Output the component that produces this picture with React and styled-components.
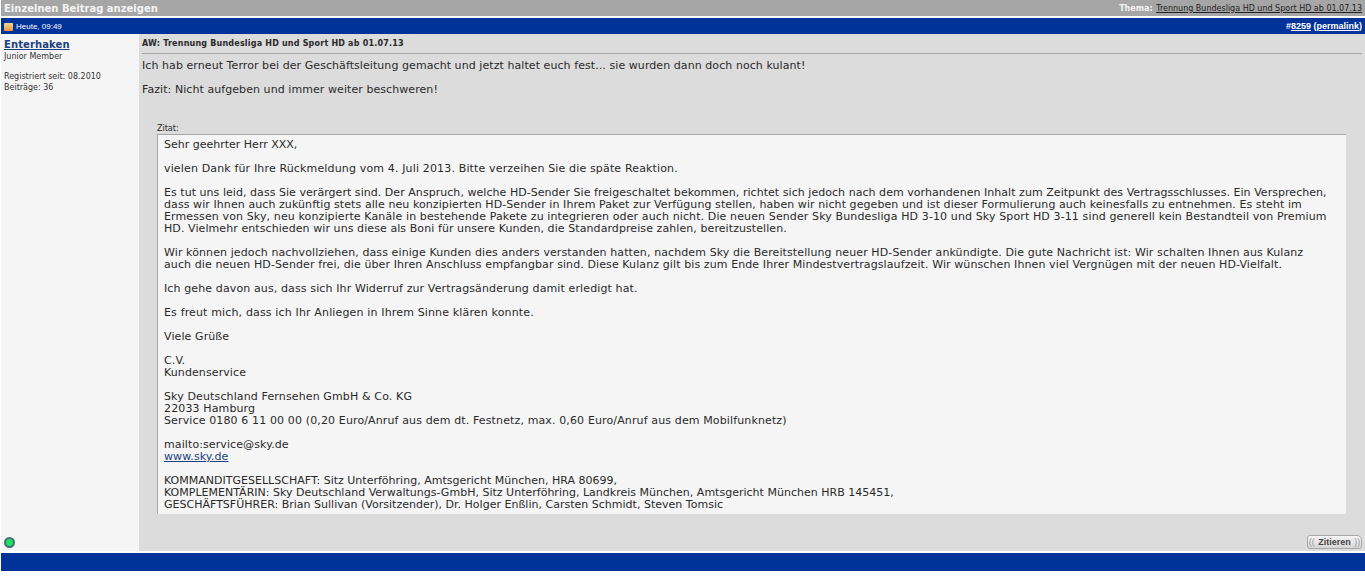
import React from "react";
import styled, { createGlobalStyle } from "styled-components";

const Global = createGlobalStyle`
  html, body {
    margin: 0;
    padding: 0;
    background: #fff;
  }
  body {
    font-family: "DejaVu Sans", Verdana, sans-serif;
    font-size: 11px;
    color: #2a2a2a;
  }
`;

const Page = styled.div`
  padding-left: 1px;
  width: 1364px;
  height: 577px;
  overflow: hidden;
`;

const TitleBar = styled.div`
  display: flex;
  justify-content: space-between;
  align-items: center;
  height: 16px;
  background: #a6a6a6;
  padding: 0 3px;
  margin-bottom: 2px;
`;

const PageTitle = styled.div`
  color: #f4f4f4;
  font-weight: bold;
  font-size: 10px;
`;

const ThreadInfo = styled.div`
  font-size: 8px;
  color: #f4f4f4;
  b {
    font-weight: bold;
    margin-right: 1px;
  }
  a {
    color: #222;
    text-decoration: underline;
  }
`;

const BlueBar = styled.div`
  display: flex;
  justify-content: space-between;
  align-items: center;
  height: 16px;
  background: #003399;
  color: #fff;
  font-family: "Liberation Sans", Arial, sans-serif;
  font-size: 9px;
  padding: 0 3px;
`;

const DateCell = styled.div`
  display: flex;
  align-items: center;
  gap: 3px;
  font-size: 8px;
`;

const PostIcon = styled.span`
  display: block;
  width: 9px;
  height: 8px;
  margin-top: 2px;
  border-radius: 1px;
  background: linear-gradient(#f8d890, #e8943c);
`;

const PostNumber = styled.div`
  font-weight: bold;
  a {
    color: #fff;
    text-decoration: underline;
  }
`;

const PostBody = styled.div`
  display: grid;
  grid-template-columns: 138px 1fr;
  height: 517px;
`;

const UserColumn = styled.div`
  background: #f5f5f5;
  padding: 4px 3px;
  display: flex;
  flex-direction: column;
`;

const UserName = styled.a`
  color: #1c3f80;
  font-weight: bold;
  font-size: 10px;
  letter-spacing: 0.1px;
  line-height: 13px;
  text-decoration: underline;
`;

const UserLine = styled.div`
  font-size: 8px;
  line-height: 11px;
  color: #333;
  margin-top: ${(p) => p.$gap || 0}px;
`;

const OnlineDot = styled.span`
  position: relative;
  top: 1px;
  display: block;
  box-sizing: border-box;
  width: 11px;
  height: 11px;
  margin: auto 0 0 0;
  border-radius: 50%;
  background: #22e060;
  border: 2px solid #3f6f78;
`;

const MessageColumn = styled.div`
  background: #dcdcdc;
  padding: 4px 3px 0;
  display: flex;
  flex-direction: column;
`;

const Subject = styled.div`
  font-weight: bold;
  font-size: 8px;
  letter-spacing: 0.2px;
  line-height: 11px;
  padding-bottom: 4px;
  border-bottom: 1px solid #a6a6a6;
`;

const Message = styled.div`
  margin-top: 6px;
  line-height: 12px;
`;

const Para = styled.p`
  margin: 0 0 12px;
  letter-spacing: ${(p) => p.$track ?? 0.1}px;
`;

const Line = styled.span`
  display: block;
  letter-spacing: ${(p) => p.$track}px;
`;

const QuoteLabel = styled.div`
  margin: 16px 0 0 15px;
  font-size: 8px;
  line-height: 10px;
`;

const QuoteBox = styled.div`
  margin: 0 16px 0 15px;
  padding: 4px 6px;
  height: 371px;
  overflow: hidden;
  background: #f5f5f5;
  border-left: 1px solid #a6a6a6;
  border-top: 1px solid #a6a6a6;
  line-height: 12px;
  white-space: nowrap;
  a {
    color: #1c3f80;
  }
`;

const PostActions = styled.div`
  display: flex;
  justify-content: flex-end;
  margin-top: auto;
  padding: 0 0 2px;
`;

const QuoteButton = styled.div`
  box-sizing: border-box;
  width: 55px;
  height: 14px;
  border: 1px solid #a8a8a8;
  border-radius: 3px 5px 3px 3px;
  background: linear-gradient(#f6f6f6, #d6d6d6);
  text-align: center;
  white-space: nowrap;
  font-family: "Liberation Sans", Arial, sans-serif;
  font-size: 9px;
  line-height: 12px;
  color: #999;
  b {
    color: #444;
    margin: 0 1px;
  }
`;

const Footer = styled.div`
  height: 18px;
  margin-top: 2px;
  background: #003399;
`;

export default function App() {
  return (
    <Page>
      <Global />
      <TitleBar>
        <PageTitle>Einzelnen Beitrag anzeigen</PageTitle>
        <ThreadInfo>
          <b>Thema:</b> <a>Trennung Bundesliga HD und Sport HD ab 01.07.13</a>
        </ThreadInfo>
      </TitleBar>
      <BlueBar>
        <DateCell>
          <PostIcon />
          Heute, 09:49
        </DateCell>
        <PostNumber>
          #<a>8259</a> (<a>permalink</a>)
        </PostNumber>
      </BlueBar>
      <PostBody>
        <UserColumn>
          <UserName>Enterhaken</UserName>
          <UserLine>Junior Member</UserLine>
          <UserLine $gap={9}>Registriert seit: 08.2010</UserLine>
          <UserLine>Beiträge: 36</UserLine>
          <OnlineDot />
        </UserColumn>
        <MessageColumn>
          <Subject>AW: Trennung Bundesliga HD und Sport HD ab 01.07.13</Subject>
          <Message>
            <Para $track={0.07}>Ich hab erneut Terror bei der Geschäftsleitung gemacht und jetzt haltet euch fest... sie wurden dann doch noch kulant!</Para>
            <Para $track={0.07}>Fazit: Nicht aufgeben und immer weiter beschweren!</Para>
          </Message>
          <QuoteLabel>Zitat:</QuoteLabel>
          <QuoteBox>
            <Para $track={0}>Sehr geehrter Herr XXX,</Para>
            <Para $track={0.15}>vielen Dank für Ihre Rückmeldung vom 4. Juli 2013. Bitte verzeihen Sie die späte Reaktion.</Para>
            <Para>
              <Line $track={0.045}>Es tut uns leid, dass Sie verärgert sind. Der Anspruch, welche HD-Sender Sie freigeschaltet bekommen, richtet sich jedoch nach dem vorhandenen Inhalt zum Zeitpunkt des Vertragsschlusses. Ein Versprechen,</Line>
              <Line $track={0.08}>dass wir Ihnen auch zukünftig stets alle neu konzipierten HD-Sender in Ihrem Paket zur Verfügung stellen, haben wir nicht gegeben und ist dieser Formulierung auch keinesfalls zu entnehmen. Es steht im</Line>
              <Line $track={0.12}>Ermessen von Sky, neu konzipierte Kanäle in bestehende Pakete zu integrieren oder auch nicht. Die neuen Sender Sky Bundesliga HD 3-10 und Sky Sport HD 3-11 sind generell kein Bestandteil von Premium</Line>
              <Line $track={0.08}>HD. Vielmehr entschieden wir uns diese als Boni für unsere Kunden, die Standardpreise zahlen, bereitzustellen.</Line>
            </Para>
            <Para>
              Wir können jedoch nachvollziehen, dass einige Kunden dies anders verstanden hatten, nachdem Sky die Bereitstellung neuer HD-Sender ankündigte. Die gute Nachricht ist: Wir schalten Ihnen aus Kulanz<br />
              auch die neuen HD-Sender frei, die über Ihren Anschluss empfangbar sind. Diese Kulanz gilt bis zum Ende Ihrer Mindestvertragslaufzeit. Wir wünschen Ihnen viel Vergnügen mit der neuen HD-Vielfalt.
            </Para>
            <Para $track={0.12}>Ich gehe davon aus, dass sich Ihr Widerruf zur Vertragsänderung damit erledigt hat.</Para>
            <Para $track={0.15}>Es freut mich, dass ich Ihr Anliegen in Ihrem Sinne klären konnte.</Para>
            <Para>Viele Grüße</Para>
            <Para>C.V.<br />Kundenservice</Para>
            <Para $track={0.13}>
              Sky Deutschland Fernsehen GmbH &amp; Co. KG<br />
              22033 Hamburg<br />
              Service 0180 6 11 00 00 (0,20 Euro/Anruf aus dem dt. Festnetz, max. 0,60 Euro/Anruf aus dem Mobilfunknetz)
            </Para>
            <Para>
              mailto:service@sky.de<br />
              <a href="#">www.sky.de</a>
            </Para>
            <Para $track={0.01}>
              KOMMANDITGESELLSCHAFT: Sitz Unterföhring, Amtsgericht München, HRA 80699,<br />
              KOMPLEMENTÄRIN: Sky Deutschland Verwaltungs-GmbH, Sitz Unterföhring, Landkreis München, Amtsgericht München HRB 145451,<br />
              GESCHÄFTSFÜHRER: Brian Sullivan (Vorsitzender), Dr. Holger Enßlin, Carsten Schmidt, Steven Tomsic
            </Para>
          </QuoteBox>
          <PostActions>
            <QuoteButton>(( <b>Zitieren</b> ))</QuoteButton>
          </PostActions>
        </MessageColumn>
      </PostBody>
      <Footer />
    </Page>
  );
}
